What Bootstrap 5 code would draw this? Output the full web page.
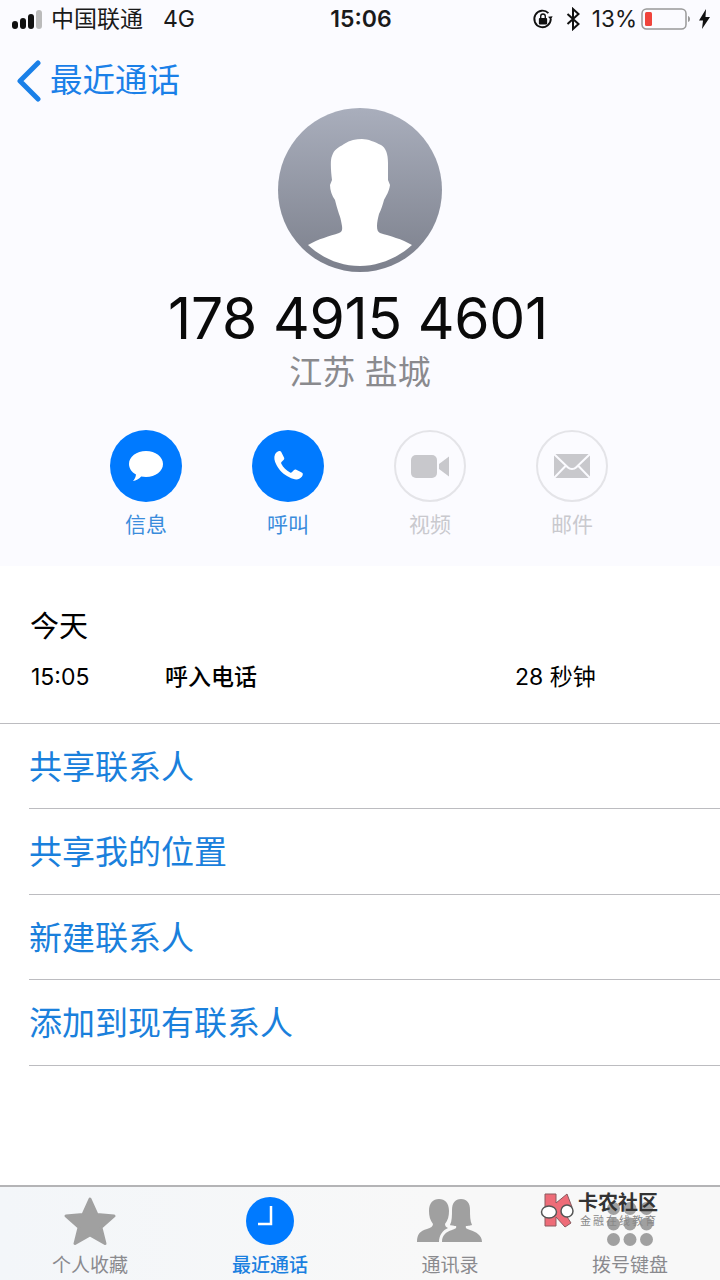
<!DOCTYPE html>
<html lang="zh">
<head>
<meta charset="utf-8">
<title>最近通话</title>
<link href="https://cdn.jsdelivr.net/npm/bootstrap@5.3.0/dist/css/bootstrap.min.css" rel="stylesheet">
<style>
html,body{margin:0;background:#fff}
body{width:720px;height:1280px;overflow:hidden;position:relative;font-family:Inter,"Noto Sans CJK SC",sans-serif;color:#000}
.top-zone{height:566px;background:#fbfbff}
.status{height:38px;padding:0 10px 0 12px;font-size:23px;line-height:38px;color:#1a1a1a}
.status-side{width:272px}
.sig{gap:2px;margin-right:9px}
.sig i{display:block;width:6px;border-radius:3px;background:#111}
.sig i:nth-child(1){height:8px}.sig i:nth-child(2){height:11px}.sig i:nth-child(3){height:15px}.sig i:nth-child(4){height:19px;background:#bbb}
.net{margin-left:20px}
.clock{font-weight:600;font-size:23px;font-family:Inter,sans-serif}
.pct{font-size:22.5px;margin:0 -4px 0 4px}
.back{height:86px;padding-left:17px;color:#1a80e8;font-size:32.5px;gap:9px}
.avatar{display:block;margin:-16px auto 0;width:164px;height:164px}
.phone{font-size:57px;font-weight:400;line-height:60px;margin:17px 0 -1px;padding-right:4px;letter-spacing:-.25px;font-family:Inter,sans-serif;color:#0a0a0a}
.place{font-size:33px;line-height:48px;color:#8a8a8e}
.acts{margin-top:34px;padding-left:75px}
.act{width:142px;font-size:21px;line-height:30px;color:#3a8cdc}
.act.off{color:#c9c9ce}
.disc{width:72px;height:72px;border-radius:50%;background:#007aff;margin-bottom:8px}
.off .disc{background:transparent;border:2px solid #e4e4e8}
.today{font-size:29px;line-height:40px;padding:41px 0 0 30px}
.call{font-size:23px;line-height:34px;padding:13px 0 0 31px;height:76px}
.c-time{width:134px}.c-kind{width:350px;font-weight:500}
.rows{margin:0;padding:0;list-style:none;border-top:1px solid #bcbcc0}
.rows li{height:85.4px;line-height:86px;font-size:33px;color:#1a80dc;margin-left:29px;border-bottom:1px solid #bcbcc0}
.tabs{position:absolute;left:0;right:0;bottom:0;height:95px;border-top:2px solid #b4b4b6;background:linear-gradient(90deg,#f3f6f9,#f8f8f8 60%,#f8f8f8)}
.tabi{width:180px;font-size:19px;line-height:24px;color:#8a8a8e}
.tabi.on{color:#1a80e0;font-weight:500}
.ico{height:67px;width:100%}
.ico-low{padding-bottom:8px}
.wm{position:absolute;left:540px;top:1192px;width:122px;height:44px}
.wm-a{font-size:20px;line-height:22px;font-weight:700;color:#333;left:38px;top:0;position:absolute;white-space:nowrap}
.wm-b{font-size:11px;line-height:14px;color:#888;letter-spacing:2px;left:40px;top:22px;position:absolute;white-space:nowrap}
</style>
</head>
<body>
<div class="top-zone">
  <div class="status d-flex align-items-center justify-content-between">
    <div class="status-side d-flex align-items-center">
      <span class="sig d-flex align-items-end"><i></i><i></i><i></i><i></i></span>
      <span>中国联通</span><span class="net">4G</span>
    </div>
    <div class="clock">15:06</div>
    <div class="status-side d-flex align-items-center justify-content-end gap-2">
      <svg width="22" height="24" viewBox="0 0 24 24"><path d="M20.500 12a9 9 0 1 1-2.600-6.400" fill="none" stroke="#111" stroke-width="2"/><path d="M22.500 9l-2 4-3-3.400z" fill="#111"/><rect x="7.500" y="11" width="9" height="7" rx="1" fill="#111"/><path d="M9.500 11V9a2.500 2.500 0 0 1 5 0v2" fill="none" stroke="#111" stroke-width="1.500"/></svg>
      <svg class="ms-1" width="14" height="24" viewBox="0 0 14 24"><path d="M1.500 7l11 10-5.500 5V2l5.500 5-11 10" fill="none" stroke="#111" stroke-width="2"/></svg>
      <span class="pct">13%</span>
      <svg width="50" height="24" viewBox="0 0 50 24"><rect x="1" y="2" width="44" height="20" rx="4.500" fill="none" stroke="#999" stroke-width="1.500"/><rect x="4" y="5" width="7" height="14" rx="1.500" fill="#f0443c"/><path d="M47 9c1.500.5 2 1.500 2 3s-.5 2.500-2 3z" fill="#999"/></svg>
      <svg width="11" height="20" viewBox="0 0 11 20"><path d="M7 0L0 11.500h4L3 20l8-12H6.500z" fill="#111"/></svg>
    </div>
  </div>
  <div class="back d-flex align-items-center">
    <svg width="24" height="42" viewBox="0 0 24 42"><path d="M21 3L3 21l18 18" fill="none" stroke="#1a80e8" stroke-width="5" stroke-linecap="round" stroke-linejoin="round"/></svg>
    <span>最近通话</span>
  </div>
  <svg class="avatar" viewBox="0 0 164 164">
    <defs>
      <linearGradient id="ag" x1="0" y1="0" x2="0" y2="1"><stop offset="0" stop-color="#a9aebc"/><stop offset="1" stop-color="#7c808c"/></linearGradient>
    </defs>
    <circle cx="82" cy="82" r="82" fill="url(#ag)"/>
    <path d="M30 137C40 131 52 128 61 125C64 124 64.500 122 64 118C63 112 62 108 61 106C59 100 58 96 57 92C54 88 52 82 52 77L54 72C53 64 52 52 54 48C56 41 60 40 66 36C72 32 78 31 84 31C90 31 97 34 103 37C108 40 110 46 110 55C110 62 110 68 110 72L112 77C111 84 108 88 106 92C105 96 103 102 101 106C100 110 99 114 99 118C99 122 100 124 102 125C112 128 124 131 134 137C120 150 100 158 82 158C62 158 44 150 30 137Z" fill="#fff"/>
  </svg>
  <div class="phone text-center">178 4915 4601</div>
  <div class="place text-center">江苏 盐城</div>
  <div class="acts d-flex">
    <div class="act d-flex flex-column align-items-center">
      <div class="disc d-flex align-items-center justify-content-center">
        <svg width="36" height="32" viewBox="0 0 36 32"><path d="M18 1c9.500 0 17 5.700 17 13s-7.500 13-17 13c-1.700 0-3.300-.2-4.800-.5C11 29 8 30.500 5 31c1.700-1.800 2.800-4 3-6.500C3.500 22 1 18.300 1 14 1 6.700 8.500 1 18 1z" fill="#fff"/></svg>
      </div>信息
    </div>
    <div class="act d-flex flex-column align-items-center">
      <div class="disc d-flex align-items-center justify-content-center">
        <svg width="32" height="32" viewBox="0 0 32 32"><path d="M3 4.500C4 2.500 6 1 7.500 1c1 0 1.500.5 2 1.500l2.500 5c.5 1 .3 1.800-.5 2.500L9.500 12c-.5.500-.5 1-.2 1.700 2 3.800 5 6.800 8.800 8.800.7.300 1.200.3 1.700-.2l2-2c.7-.8 1.500-1 2.500-.5l5 2.500c1 .5 1.500 1 1.500 2 0 1.500-1.500 3.500-3.500 4.500-2.500 1.300-6 .7-10-1.500C11 24 7.500 20.500 4.500 15 2.300 11 1.700 7 3 4.500z" fill="#fff"/></svg>
      </div>呼叫
    </div>
    <div class="act off d-flex flex-column align-items-center">
      <div class="disc d-flex align-items-center justify-content-center">
        <svg width="38" height="23" viewBox="0 0 38 23"><rect width="26" height="23" rx="5" fill="#c8c8cc"/><path d="M28 9l10-7.500v20L28 14z" fill="#c8c8cc"/></svg>
      </div>视频
    </div>
    <div class="act off d-flex flex-column align-items-center">
      <div class="disc d-flex align-items-center justify-content-center">
        <svg width="36" height="24" viewBox="0 0 36 24"><path d="M0 0h36v24H0z" fill="#c8c8cc"/><path d="M0 0l14 13.500c2 2 6 2 8 0L36 0M0 24l12-12.500M36 24L24 11.500" fill="none" stroke="#fbfbff" stroke-width="2"/></svg>
      </div>邮件
    </div>
  </div>
</div>
<div class="today">今天</div>
<div class="call d-flex">
  <span class="c-time">15:05</span><span class="c-kind">呼入电话</span><span>28 秒钟</span>
</div>
<ul class="rows">
  <li>共享联系人</li>
  <li>共享我的位置</li>
  <li>新建联系人</li>
  <li>添加到现有联系人</li>
</ul>
<div class="tabs d-flex">
  <div class="tabi d-flex flex-column align-items-center">
    <div class="ico d-flex justify-content-center align-items-center">
      <svg width="54" height="50" viewBox="0 0 54 50"><path d="M27 3l7 15.500 17 1.500-13 11.500 4 16L27 39 12 47.500l4-16L3 20l17-1.500z" fill="#a0a0a0" stroke="#a0a0a0" stroke-width="3" stroke-linejoin="round"/></svg>
    </div>个人收藏
  </div>
  <div class="tabi on d-flex flex-column align-items-center">
    <div class="ico d-flex justify-content-center align-items-center">
      <svg width="48" height="48" viewBox="0 0 48 48"><circle cx="24" cy="24" r="24" fill="#007aff"/><path d="M25 9v18H12" fill="none" stroke="#fff" stroke-width="2.500"/></svg>
    </div>最近通话
  </div>
  <div class="tabi d-flex flex-column align-items-center">
    <div class="ico d-flex justify-content-center align-items-center">
      <svg width="66" height="43" viewBox="0 0 66 43"><path d="M0 43C0 35 3 32 10 30C14 29 16 27 16 25C13 21 12 17 12 12C12 4 16 0 22 0C28 0 32 4 32 12C32 17 31 21 28 25C28 27 29 28 31 29C26 31 22 36 22 43Z" fill="#a0a0a0"/><path d="M25 43C25 36 29 33 35 31C38 30 40 29 39 27C36 27 33 26 33 26C35 22 35 16 35 11C35 4 38 0 44 0C50 0 53 4 53 11C53 16 53 22 55 26C55 26 52 27 49 27C48 29 50 30 53 31C59 33 65 36 65 43Z" fill="#a0a0a0"/></svg>
    </div>通讯录
  </div>
  <div class="tabi d-flex flex-column align-items-center">
    <div class="ico ico-low d-flex justify-content-center align-items-end">
      <svg width="46" height="44" viewBox="0 0 46 44"><g fill="#a0a0a0"><circle cx="6.500" cy="6.500" r="6.500"/><circle cx="23" cy="6.500" r="6.500"/><circle cx="39.500" cy="6.500" r="6.500"/><circle cx="6.500" cy="22" r="6.500"/><circle cx="23" cy="22" r="6.500"/><circle cx="39.500" cy="22" r="6.500"/><circle cx="6.500" cy="37.500" r="6.500"/><circle cx="23" cy="37.500" r="6.500"/><circle cx="39.500" cy="37.500" r="6.500"/></g></svg>
    </div>拨号键盘
  </div>
</div>
<div class="wm">
  <svg width="38" height="36" viewBox="0 0 38 36"><path d="M5 2h11v9L27 2l5 13-8 5 7 11-6 4-9-10v9H5z" fill="#ee6c78" stroke="#8a5a5f"/><ellipse cx="9" cy="20" rx="7.500" ry="6" fill="#fff" stroke="#555" stroke-width="1.500"/><ellipse cx="27" cy="19" rx="6" ry="6" fill="#fff" stroke="#555" stroke-width="1.500"/></svg>
  <span class="wm-a">卡农社区</span>
  <span class="wm-b">金融在线教育</span>
</div>
<script src="https://cdn.jsdelivr.net/npm/bootstrap@5.3.0/dist/js/bootstrap.bundle.min.js"></script>
</body>
</html>
